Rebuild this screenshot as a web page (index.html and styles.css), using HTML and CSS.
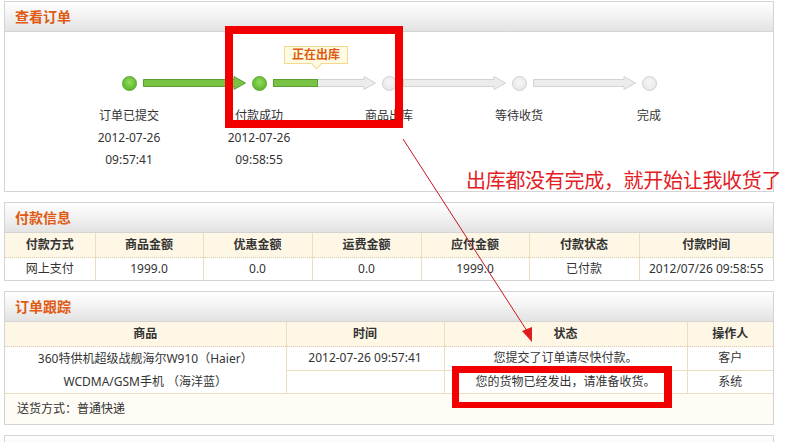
FILE: index.html
```html
<!DOCTYPE html>
<html lang="zh-CN">
<head>
  <meta charset="UTF-8" />
  <title>查看订单</title>
  <link rel="stylesheet" href="styles.css">
</head>
<body>
<div class="page">

  <div class="panel">
    <div class="panel-hd">查看订单</div>
    <div class="steps">
      <div class="track">
        <span class="dot done"></span>
        <svg class="arrow" width="103" height="14" viewBox="0 0 103 14">
          <polygon points="0.5,3.5 91,3.5 91,0.5 102.5,7 91,13.5 91,10.5 0.5,10.5" fill="#78c244" stroke="#5b9f33"/>
        </svg>
        <span class="dot done"></span>
        <div class="tip">正在出库</div>
        <svg class="arrow" width="103" height="14" viewBox="0 0 103 14">
          <polygon points="0.5,3.5 91,3.5 91,0.5 102.5,7 91,13.5 91,10.5 0.5,10.5" fill="#ececec" stroke="#d2d2d2"/>
          <rect x="0.5" y="3.5" width="44" height="7" fill="#78c244" stroke="#5b9f33"/>
        </svg>
        <span class="dot"></span>
        <svg class="arrow" width="103" height="14" viewBox="0 0 103 14">
          <polygon points="0.5,3.5 91,3.5 91,0.5 102.5,7 91,13.5 91,10.5 0.5,10.5" fill="#ececec" stroke="#d2d2d2"/>
        </svg>
        <span class="dot"></span>
        <svg class="arrow" width="103" height="14" viewBox="0 0 103 14">
          <polygon points="0.5,3.5 91,3.5 91,0.5 102.5,7 91,13.5 91,10.5 0.5,10.5" fill="#ececec" stroke="#d2d2d2"/>
        </svg>
        <span class="dot"></span>
      </div>
      <div class="labels">
        <div class="label">订单已提交<br>2012-07-26<br>09:57:41</div>
        <div class="label">付款成功<br>2012-07-26<br>09:58:55</div>
        <div class="label">商品出库</div>
        <div class="label">等待收货</div>
        <div class="label">完成</div>
      </div>
    </div>
  </div>

  <div class="panel">
    <div class="panel-hd">付款信息</div>
    <table class="grid">
      <colgroup>
        <col style="width: 90px">
        <col style="width: 108px">
        <col style="width: 109px">
        <col style="width: 109px">
        <col style="width: 108px">
        <col style="width: 110px">
        <col>
      </colgroup>
      <tr>
        <th>付款方式</th>
        <th>商品金额</th>
        <th>优惠金额</th>
        <th>运费金额</th>
        <th>应付金额</th>
        <th>付款状态</th>
        <th>付款时间</th>
      </tr>
      <tr>
        <td>网上支付</td>
        <td>1999.0</td>
        <td>0.0</td>
        <td>0.0</td>
        <td>1999.0</td>
        <td>已付款</td>
        <td>2012/07/26 09:58:55</td>
      </tr>
    </table>
  </div>

  <div class="panel">
    <div class="panel-hd">订单跟踪</div>
    <table class="grid track-table">
      <colgroup>
        <col style="width: 281px">
        <col style="width: 158px">
        <col style="width: 243px">
        <col>
      </colgroup>
      <tr>
        <th>商品</th>
        <th>时间</th>
        <th>状态</th>
        <th>操作人</th>
      </tr>
      <tr>
        <td rowspan="2" class="goods">360特供机超级战舰海尔W910（Haier）<br>WCDMA/GSM手机 （海洋蓝）</td>
        <td>2012-07-26 09:57:41</td>
        <td>您提交了订单请尽快付款。</td>
        <td>客户</td>
      </tr>
      <tr class="row2">
        <td></td>
        <td>您的货物已经发出，请准备收货。</td>
        <td>系统</td>
      </tr>
      <tr>
        <td colspan="4" class="ship">送货方式：普通快递</td>
      </tr>
    </table>
  </div>

  <div class="panel">
    <div class="panel-hd">&nbsp;</div>
  </div>

  <!-- annotations drawn over the screenshot -->
  <div class="mark mark-1"></div>
  <div class="mark mark-2"></div>
  <div class="note">出库都没有完成，就开始让我收货了</div>
  <svg class="pointer" width="795" height="442" viewBox="0 0 795 442">
    <line x1="403" y1="139" x2="529" y2="334" stroke="#c8161d" stroke-width="1"/>
    <polygon points="532,342 522,331 532,327" fill="#e01b1b"/>
  </svg>
</div>
</body>
</html>
```

FILE: styles.css
```css
body {
  margin: 0;
  padding: 0;
  background-color: #fff;
  font-family: "Noto Sans", "Noto Sans CJK SC", sans-serif;
  font-size: 12px;
  color: #333;
}

.page {
  position: relative;
  padding: 1px 0 0 4px;
  height: 441px;
  overflow: hidden;
}

.panel {
  width: 770px;
  box-sizing: border-box;
  border: 1px solid #d4d4d4;
  margin-bottom: 10px;
}

.panel-hd {
  height: 29px;
  line-height: 30px;
  border-bottom: 1px solid #d4d4d4;
  background: linear-gradient(#ffffff, #f3f3f3 45%, #e3e3e3);
  padding-left: 10px;
  font-size: 14px;
  font-weight: bold;
  color: #e05a12;
}

/* progress steps */
.steps {
  padding: 43px 0 20px 0;
}

.track {
  position: relative;
  display: flex;
  align-items: center;
  height: 16px;
  padding-left: 117px;
}

.dot {
  width: 13px;
  height: 13px;
  border-radius: 50%;
  border: 1px solid #d0d0d0;
  background: radial-gradient(circle at 50% 40%, #f6f6f6, #e4e4e4);
}

.dot.done {
  border-color: #59a52f;
  background: radial-gradient(circle at 50% 40%, #92dc5e, #5cb82b 75%);
}

.arrow {
  margin: 0 6px;
  display: block;
}

.tip {
  position: absolute;
  left: 279px;
  top: -29px;
  width: 62px;
  height: 16px;
  line-height: 16px;
  text-align: center;
  background-color: #fffbe2;
  border: 1px solid #f1d992;
  color: #e05a12;
  font-weight: bold;
}

.tip:after {
  content: "";
  position: absolute;
  left: 28px;
  bottom: -5px;
  width: 6px;
  height: 6px;
  background-color: #fffbe2;
  border-right: 1px solid #f1d992;
  border-bottom: 1px solid #f1d992;
  transform: rotate(45deg);
}

.labels {
  display: flex;
  padding-left: 59px;
  margin-top: 14px;
}

.label {
  width: 130px;
  text-align: center;
  line-height: 22px;
}

/* tables */
.grid {
  width: 100%;
  border-collapse: collapse;
  table-layout: fixed;
  line-height: 16px;
}

.grid th {
  height: 24px;
  padding: 0;
  background-color: #fef7e5;
  font-weight: bold;
  border-left: 1px solid #ecdcc0;
  border-bottom: 1px dotted #dccba8;
}

.grid td {
  height: 22px;
  padding: 0;
  text-align: center;
  border-left: 1px solid #ecdcc0;
}

.grid th:first-child,
.grid td:first-child {
  border-left: none;
}

.track-table td {
  border-bottom: 1px solid #ecdcc0;
}

.track-table td.goods {
  border-left: none;
  line-height: 23px;
}

.track-table .row2 td:first-child {
  border-left: 1px solid #ecdcc0;
}

.track-table td.ship {
  height: 30px;
  text-align: left;
  padding-left: 12px;
  background-color: #fefcf4;
  border-bottom: none;
  border-left: none;
}

/* annotations */
.mark {
  position: absolute;
  border: 8px solid #f20000;
}

.mark-1 {
  left: 225px;
  top: 26px;
  width: 162px;
  height: 86px;
}

.mark-2 {
  left: 452px;
  top: 366px;
  width: 205px;
  height: 29px;
  border-width: 7px 8px 6px 7px;
}

.note {
  position: absolute;
  left: 466px;
  top: 166px;
  font-size: 20px;
  letter-spacing: -0.3px;
  color: #e3201f;
  font-family: "Noto Sans CJK SC", sans-serif;
  line-height: 28px;
}

.pointer {
  position: absolute;
  left: 0;
  top: 0;
}
```
